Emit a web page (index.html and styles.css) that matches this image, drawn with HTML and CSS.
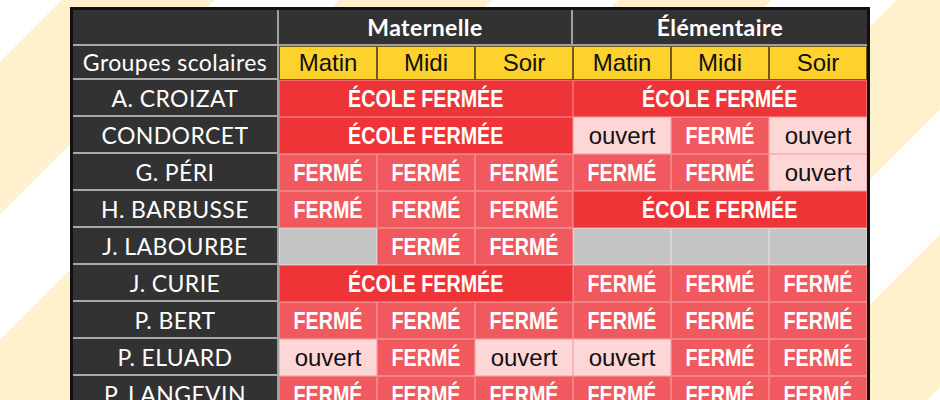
FILE: index.html
```html
<!DOCTYPE html>
<html lang="fr">
<head>
<meta charset="utf-8">
<title>Groupes scolaires</title>
<link rel="stylesheet" href="styles.css">
</head>
<body>
<div class="page">
  <table class="grid">
    <colgroup>
      <col class="c-name"><col class="c-cell"><col class="c-cell"><col class="c-cell"><col class="c-cell"><col class="c-cell"><col class="c-cell">
    </colgroup>
    <thead>
      <tr class="r-top">
        <th class="name"></th>
        <th class="level sep" colspan="3">Maternelle</th>
        <th class="level" colspan="3">Élémentaire</th>
      </tr>
      <tr class="r-sub">
        <th class="name">Groupes scolaires</th>
        <th class="slot">Matin</th><th class="slot">Midi</th><th class="slot">Soir</th>
        <th class="slot">Matin</th><th class="slot">Midi</th><th class="slot">Soir</th>
      </tr>
    </thead>
    <tbody>
      <tr>
        <th class="name">A. CROIZAT</th>
        <td class="closed" colspan="3"><span class="cond">ÉCOLE FERMÉE</span></td>
        <td class="closed" colspan="3"><span class="cond">ÉCOLE FERMÉE</span></td>
      </tr>
      <tr>
        <th class="name">CONDORCET</th>
        <td class="closed" colspan="3"><span class="cond">ÉCOLE FERMÉE</span></td>
        <td class="open">ouvert</td><td class="shut"><span class="cond">FERMÉ</span></td><td class="open">ouvert</td>
      </tr>
      <tr>
        <th class="name">G. PÉRI</th>
        <td class="shut"><span class="cond">FERMÉ</span></td><td class="shut"><span class="cond">FERMÉ</span></td><td class="shut"><span class="cond">FERMÉ</span></td>
        <td class="shut"><span class="cond">FERMÉ</span></td><td class="shut"><span class="cond">FERMÉ</span></td><td class="open">ouvert</td>
      </tr>
      <tr>
        <th class="name">H. BARBUSSE</th>
        <td class="shut"><span class="cond">FERMÉ</span></td><td class="shut"><span class="cond">FERMÉ</span></td><td class="shut"><span class="cond">FERMÉ</span></td>
        <td class="closed" colspan="3"><span class="cond">ÉCOLE FERMÉE</span></td>
      </tr>
      <tr>
        <th class="name">J. LABOURBE</th>
        <td class="none"></td><td class="shut"><span class="cond">FERMÉ</span></td><td class="shut"><span class="cond">FERMÉ</span></td>
        <td class="none"></td><td class="none"></td><td class="none"></td>
      </tr>
      <tr>
        <th class="name">J. CURIE</th>
        <td class="closed" colspan="3"><span class="cond">ÉCOLE FERMÉE</span></td>
        <td class="shut"><span class="cond">FERMÉ</span></td><td class="shut"><span class="cond">FERMÉ</span></td><td class="shut"><span class="cond">FERMÉ</span></td>
      </tr>
      <tr>
        <th class="name">P. BERT</th>
        <td class="shut"><span class="cond">FERMÉ</span></td><td class="shut"><span class="cond">FERMÉ</span></td><td class="shut"><span class="cond">FERMÉ</span></td>
        <td class="shut"><span class="cond">FERMÉ</span></td><td class="shut"><span class="cond">FERMÉ</span></td><td class="shut"><span class="cond">FERMÉ</span></td>
      </tr>
      <tr>
        <th class="name">P. ELUARD</th>
        <td class="open">ouvert</td><td class="shut"><span class="cond">FERMÉ</span></td><td class="open">ouvert</td>
        <td class="open">ouvert</td><td class="shut"><span class="cond">FERMÉ</span></td><td class="shut"><span class="cond">FERMÉ</span></td>
      </tr>
      <tr>
        <th class="name">P. LANGEVIN</th>
        <td class="shut"><span class="cond">FERMÉ</span></td><td class="shut"><span class="cond">FERMÉ</span></td><td class="shut"><span class="cond">FERMÉ</span></td>
        <td class="shut"><span class="cond">FERMÉ</span></td><td class="shut"><span class="cond">FERMÉ</span></td><td class="shut"><span class="cond">FERMÉ</span></td>
      </tr>
    </tbody>
  </table>
</div>
</body>
</html>
```

FILE: styles.css
```css
html, body {
  margin: 0;
  padding: 0;
}

.page {
  width: 940px;
  height: 400px;
  overflow: hidden;
  box-sizing: border-box;
  padding-top: 7px;
  background: repeating-linear-gradient(135deg,
    #ffffff 0 43.8px,
    #fff1cc 43.8px 152px,
    #ffffff 152px 196.6px);
}

.grid {
  margin: 0 auto;
  width: 800px;
  table-layout: fixed;
  border-collapse: separate;
  border-spacing: 0;
  border: 3px solid #111111;
  background: #323232;
}

.c-name { width: 206px; }
.c-cell { width: 98px; }

.grid th,
.grid td {
  padding: 0;
  text-align: center;
  vertical-align: middle;
  white-space: nowrap;
}

.name {
  background: #323232;
  color: #ffffff;
  font-family: Lato, "Open Sans", sans-serif;
  font-weight: 400;
  font-size: 23px;
  letter-spacing: 0.4px;
  border-right: 2px solid #a0a0a0;
  border-bottom: 2px solid #a8a8a8;
}

.r-top th {
  height: 34px;
}

.level {
  color: #ffffff;
  font-family: Lato, "Open Sans", sans-serif;
  font-weight: 700;
  font-size: 23px;
  letter-spacing: 0.4px;
  border-bottom: 2px solid #a0a0a0;
}

.level.sep {
  border-right: 2px solid #a0a0a0;
}

.r-sub th {
  height: 32px;
}

.slot {
  background: #fed22c;
  color: #111111;
  font-family: "Liberation Sans", Arial, sans-serif;
  font-weight: 400;
  font-size: 24px;
  border: 1px solid #6e5b1c;
}

tbody th,
tbody td {
  height: 35px;
}

tbody td {
  border: 1px solid rgba(255, 255, 255, 0.25);
  font-family: "Liberation Sans", Arial, sans-serif;
  font-size: 24px;
  color: #ffffff;
}

.cond {
  display: inline-block;
  font-weight: 700;
  transform: scaleX(0.82);
}

.closed {
  background: #ef3438;
}

.shut {
  background: #f05a5e;
}

.open {
  background: #fdd6d6;
  border-color: rgba(240, 120, 125, 0.35);
  color: #111111;
  font-weight: 400;
}

.grid td.open {
  border-color: rgba(240, 120, 125, 0.35);
}

.grid td.none {
  background: #c4c4c4;
  border-color: rgba(255, 230, 230, 0.45);
}
```
